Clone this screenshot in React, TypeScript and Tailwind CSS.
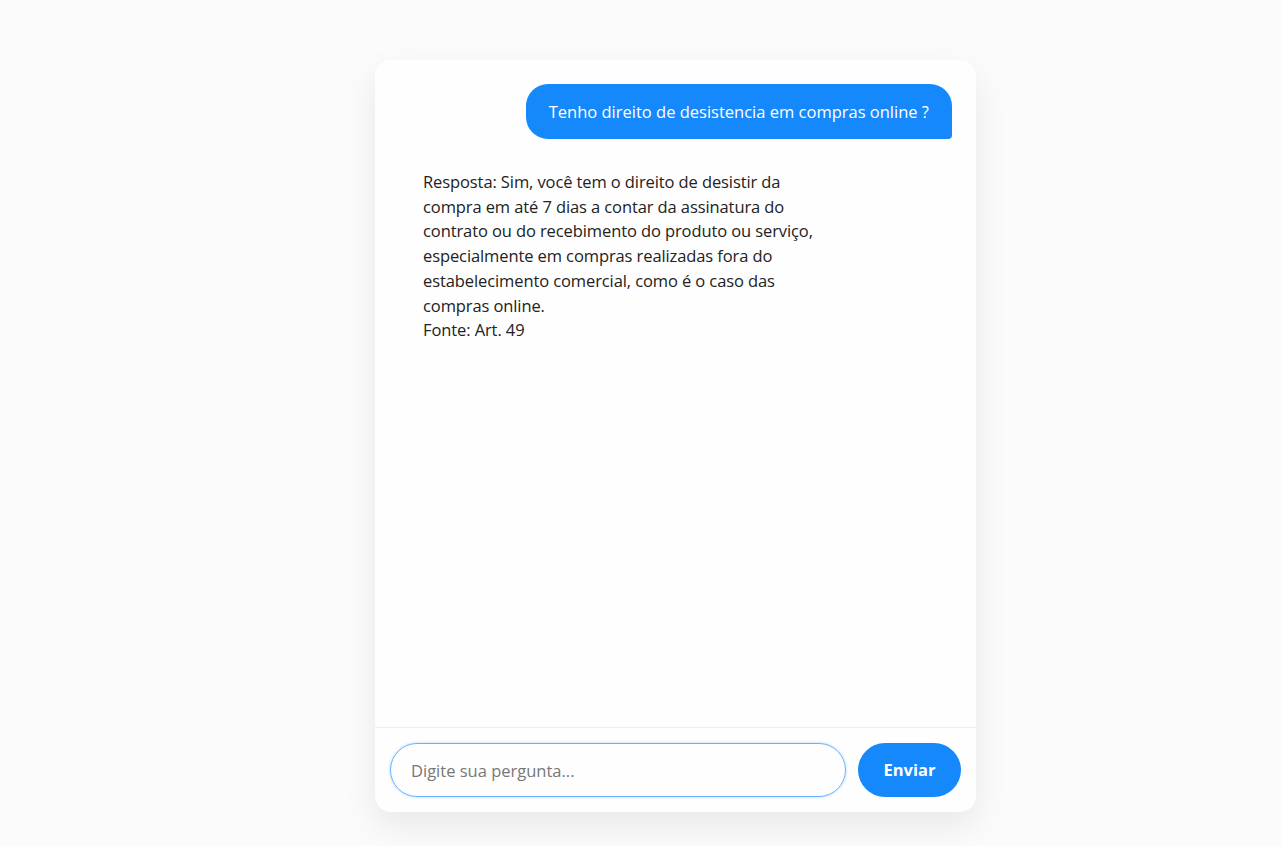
import React, { useState } from 'react';

const resposta = [
  'Resposta: Sim, você tem o direito de desistir da compra em até 7 dias a contar da assinatura do contrato ou do recebimento do produto ou serviço, especialmente em compras realizadas fora do estabelecimento comercial, como é o caso das compras online.',
  'Fonte: Art. 49',
];

export default function App() {
  const [pergunta, setPergunta] = useState('');

  return (
    <div className="min-h-[846px] w-full bg-[#fbfbfc] pt-[60px] pl-[375px] font-['Open_Sans','Liberation_Sans',sans-serif]">
      <div className="flex h-[752px] w-[601px] flex-col overflow-hidden rounded-2xl bg-[#fefefe] shadow-[0_14px_34px_rgba(0,0,0,0.08)]">
        {/* messages */}
        <div className="flex flex-1 flex-col gap-4 p-6">
          <div className="flex justify-end">
            <div className="rounded-[22px] rounded-br-[4px] bg-[#1589fb] px-[23px] py-[15px] text-[16.5px] leading-[25px] text-white">
              Tenho direito de desistencia em compras online ?
            </div>
          </div>
          <div className="flex justify-start">
            <div className="w-[456px] px-6 py-[15px] text-[16.5px] leading-[24.7px] tracking-[-0.1px] text-[#222]">
              {resposta.map((linha) => (
                <p key={linha}>{linha}</p>
              ))}
            </div>
          </div>
        </div>

        {/* input */}
        <div className="flex items-center gap-3 border-t border-[#eeeeee] px-[15px] py-[15px]">
          <input
            type="text"
            autoFocus
            value={pergunta}
            onChange={(e) => setPergunta(e.target.value)}
            placeholder="Digite sua pergunta..."
            className="h-[54px] flex-1 rounded-full border border-[#6ab1f7] px-5 text-[16.5px] text-[#333] shadow-[0_0_3px_rgba(21,137,251,0.35)] outline-none placeholder:text-[#777]"
          />
          <button className="h-[54px] w-[103px] rounded-full bg-[#1589fb] text-[16.5px] font-bold text-white">
            Enviar
          </button>
        </div>
      </div>
    </div>
  );
}
